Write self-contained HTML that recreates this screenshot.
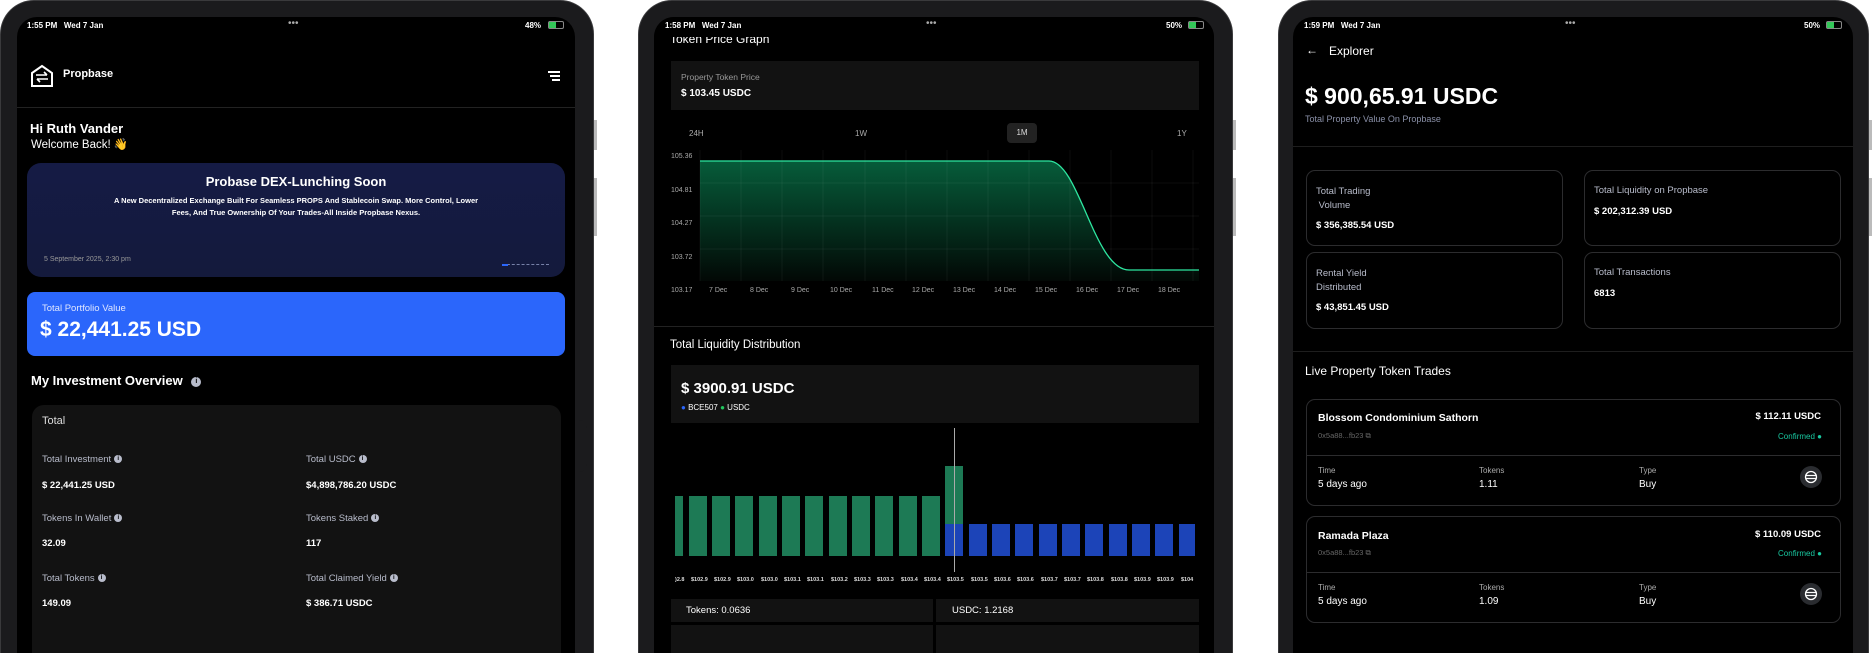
<!DOCTYPE html>
<html><head><meta charset="utf-8"><style>
*{margin:0;padding:0;box-sizing:border-box}
html,body{width:1872px;height:653px;overflow:hidden;background:#fff}
body{font-family:"Liberation Sans",sans-serif;color:#fff}
#w{position:relative;width:1872px;height:653px;overflow:hidden}
.a{position:absolute;white-space:nowrap}
.dev{position:absolute;top:0;height:653px;background:#1b1b1d;border-radius:34px 34px 0 0;border:1px solid #3a3a3c;border-bottom:none}
.scr{position:absolute;top:17px;height:636px;background:#000;border-radius:20px 20px 0 0;overflow:hidden}
.sb{font-size:8px;font-weight:bold;top:21px}
.g{color:#b8bccb}
.b{font-weight:bold}
.card{position:absolute;background:#121212}
.ol{position:absolute;border:1px solid #2c2c2e;border-radius:9px}
.info{display:inline-block;width:8px;height:8px;border-radius:50%;background:#b8bccb;color:#000;font-size:6px;text-align:center;line-height:8px;font-weight:bold;vertical-align:middle;margin-left:3px}
.bar{position:absolute;width:18px}
.pl{position:absolute;font-size:5.5px;color:#ddd;top:577px;font-weight:bold}
</style></head><body><div id="w">

<!-- DEVICE 1 -->
<div class="dev" style="left:0;width:594px"></div>
<div class="a" style="left:594px;top:120px;width:3px;height:30px;background:#bbb"></div>
<div class="a" style="left:594px;top:178px;width:3px;height:58px;background:#bbb"></div>
<div class="a" style="left:575px;top:420px;width:12px;height:52px;background:#1b1b1d;border-radius:0 8px 8px 0"></div>
<div class="scr" style="left:17px;width:558px"></div>
<div class="a sb" style="left:27px">1:55 PM&nbsp;&nbsp;&nbsp;Wed 7 Jan</div>
<div class="a" style="left:288px;top:18px;font-size:10px;color:#aaa">•••</div>
<div class="a sb" style="left:525px">48%</div>
<div class="a" style="left:548px;top:21px;width:16px;height:8px;border:1px solid #888;border-radius:2px"><div style="width:7px;height:6px;background:#34c759"></div></div>
<svg class="a" style="left:30px;top:64px" width="24" height="24" viewBox="0 0 24 24" fill="none" stroke="#fff" stroke-width="2"><path d="M2 9 L12 2 L22 9 V22 H2 Z"/><path d="M6 11 H17 M14 8 L17 11 M18 15 H7 M10 18 L7 15" stroke-width="1.6"/></svg>
<div class="a b" style="left:63px;top:68px;font-size:11px">Propbase</div>
<div class="a" style="left:548px;top:71px;width:12px;height:2px;background:#fff"></div>
<div class="a" style="left:550px;top:75px;width:10px;height:2px;background:#fff"></div>
<div class="a" style="left:552px;top:79px;width:8px;height:2px;background:#fff"></div>
<div class="a" style="left:17px;top:107px;width:558px;height:1px;background:#222"></div>
<div class="a b" style="left:30px;top:121px;font-size:13px">Hi Ruth Vander</div>
<div class="a" style="left:31px;top:137px;font-size:11.5px">Welcome Back! <span style="color:#f5c43c">👋</span></div>
<div class="a" style="left:27px;top:163px;width:538px;height:114px;background:linear-gradient(#151b45,#141a3c);border-radius:14px"></div>
<div class="a b" style="left:27px;width:538px;text-align:center;top:174px;font-size:13px">Probase DEX-Lunching Soon</div>
<div class="a b" style="left:27px;width:538px;text-align:center;top:195px;font-size:7.5px;line-height:11.5px;white-space:normal;padding:0 80px">A New Decentralized Exchange Built For Seamless PROPS And Stablecoin Swap. More Control, Lower Fees, And True Ownership Of Your Trades-All Inside Propbase Nexus.</div>
<div class="a" style="left:44px;top:256px;font-size:7px;color:#999">5 September 2025, 2:30 pm</div>
<div class="a" style="left:502px;top:264px;width:47px;height:1px;border-top:1px dashed #7781a8"></div>
<div class="a" style="left:502px;top:264px;width:6px;height:1.5px;background:#2b66fb"></div>
<div class="a" style="left:27px;top:292px;width:538px;height:64px;background:#2b66fb;border-radius:8px"></div>
<div class="a" style="left:42px;top:303px;font-size:9.5px;color:#dfe6ff">Total Portfolio Value</div>
<div class="a b" style="left:40px;top:318px;font-size:21px">$ 22,441.25 USD</div>
<div class="a b" style="left:31px;top:373px;font-size:13px">My Investment Overview <span class="info" style="width:10px;height:10px;line-height:10px;font-size:7px;margin-left:5px">i</span></div>
<div class="card" style="left:32px;top:405px;width:529px;height:248px;border-radius:12px 12px 0 0"></div>
<div class="a" style="left:42px;top:415px;font-size:11px;color:#ddd">Total</div>
<div class="a g" style="left:42px;top:454px;font-size:9.5px">Total Investment<span class="info">i</span></div>
<div class="a b" style="left:42px;top:480px;font-size:9.5px">$ 22,441.25 USD</div>
<div class="a g" style="left:306px;top:454px;font-size:9.5px">Total USDC<span class="info">i</span></div>
<div class="a b" style="left:306px;top:480px;font-size:9.5px">$4,898,786.20 USDC</div>
<div class="a g" style="left:42px;top:513px;font-size:9.5px">Tokens In Wallet<span class="info">i</span></div>
<div class="a b" style="left:42px;top:538px;font-size:9.5px">32.09</div>
<div class="a g" style="left:306px;top:513px;font-size:9.5px">Tokens Staked<span class="info">i</span></div>
<div class="a b" style="left:306px;top:538px;font-size:9.5px">117</div>
<div class="a g" style="left:42px;top:573px;font-size:9.5px">Total Tokens<span class="info">i</span></div>
<div class="a b" style="left:42px;top:598px;font-size:9.5px">149.09</div>
<div class="a g" style="left:306px;top:573px;font-size:9.5px">Total Claimed Yield<span class="info">i</span></div>
<div class="a b" style="left:306px;top:598px;font-size:9.5px">$ 386.71 USDC</div>

<!-- DEVICE 2 -->
<div class="dev" style="left:638px;width:595px"></div>
<div class="a" style="left:1233px;top:120px;width:3px;height:30px;background:#bbb"></div>
<div class="a" style="left:1233px;top:178px;width:3px;height:58px;background:#bbb"></div>
<div class="a" style="left:1205px;top:422px;width:14px;height:52px;background:#1b1b1d;border-radius:8px"></div>
<div class="scr" style="left:654px;width:560px"></div>
<div class="a" style="left:654px;top:37px;width:560px;height:20px;overflow:hidden"><div class="a" style="left:16px;top:-5px;font-size:12px">Token Price Graph</div></div>
<div class="a" style="left:654px;top:17px;width:560px;height:20px;background:#000;border-radius:20px 20px 0 0"></div>
<div class="a sb" style="left:665px">1:58 PM&nbsp;&nbsp;&nbsp;Wed 7 Jan</div>
<div class="a" style="left:926px;top:18px;font-size:10px;color:#aaa">•••</div>
<div class="a sb" style="left:1166px">50%</div>
<div class="a" style="left:1188px;top:21px;width:16px;height:8px;border:1px solid #888;border-radius:2px"><div style="width:7px;height:6px;background:#34c759"></div></div>
<div class="card" style="left:671px;top:61px;width:528px;height:49px"></div>
<div class="a" style="left:681px;top:72px;font-size:8.5px;color:#999">Property Token Price</div>
<div class="a b" style="left:681px;top:88px;font-size:10px">$ 103.45 USDC</div>
<div class="a" style="left:689px;top:129px;font-size:8px;color:#aaa">24H</div>
<div class="a" style="left:855px;top:129px;font-size:8px;color:#aaa">1W</div>
<div class="a" style="left:1007px;top:123px;width:30px;height:20px;background:#222;border-radius:4px;font-size:8px;text-align:center;line-height:20px;color:#ddd">1M</div>
<div class="a" style="left:1177px;top:129px;font-size:8px;color:#aaa">1Y</div>
<svg class="a" style="left:654px;top:140px" width="560" height="160">
<defs><linearGradient id="gf" x1="0" y1="0" x2="0" y2="1"><stop offset="0" stop-color="#065c3a"/><stop offset="1" stop-color="#020805"/></linearGradient></defs>
<path d="M46 21 H395 C425 21 440 130 475 130 H545 V141 H46 Z" fill="url(#gf)"/>
<g stroke="#ffffff" stroke-opacity="0.05" stroke-width="1">
<path d="M46 10V141M87 10V141M128 10V141M169 10V141M211 10V141M252 10V141M293 10V141M334 10V141M375 10V141M416 10V141M457 10V141M498 10V141M539 10V141"/>
<path d="M46 43H545M46 76H545M46 109H545"/></g>
<path d="M46 21 H395 C425 21 440 130 475 130 H545" fill="none" stroke="#2ee6a0" stroke-width="1.3"/>
<g font-size="7" fill="#aaa" font-family="Liberation Sans">
<text x="17" y="18">105.36</text><text x="17" y="52">104.81</text><text x="17" y="85">104.27</text><text x="17" y="119">103.72</text><text x="17" y="152">103.17</text>
<text x="55" y="152">7 Dec</text><text x="96" y="152">8 Dec</text><text x="137" y="152">9 Dec</text><text x="176" y="152">10 Dec</text><text x="218" y="152">11 Dec</text><text x="258" y="152">12 Dec</text><text x="299" y="152">13 Dec</text><text x="340" y="152">14 Dec</text><text x="381" y="152">15 Dec</text><text x="422" y="152">16 Dec</text><text x="463" y="152">17 Dec</text><text x="504" y="152">18 Dec</text></g>
</svg>
<div class="a" style="left:654px;top:326px;width:560px;height:1px;background:#222"></div>
<div class="a" style="left:670px;top:339px;font-size:11.5px">Total Liquidity Distribution</div>
<div class="card" style="left:671px;top:365px;width:528px;height:58px"></div>
<div class="a b" style="left:681px;top:380px;font-size:15px">$ 3900.91 USDC</div>
<div class="a" style="left:681px;top:403px;font-size:8px"><span style="color:#2b66fb">●</span> BCE507 <span style="color:#22c55e">●</span> USDC</div>
<div class="bar" style="left:675px;top:496px;width:8px;height:60px;background:#1d7a55"></div>
<div class="bar" style="left:689px;top:496px;height:60px;background:#1d7a55"></div>
<div class="bar" style="left:712px;top:496px;height:60px;background:#1d7a55"></div>
<div class="bar" style="left:735px;top:496px;height:60px;background:#1d7a55"></div>
<div class="bar" style="left:759px;top:496px;height:60px;background:#1d7a55"></div>
<div class="bar" style="left:782px;top:496px;height:60px;background:#1d7a55"></div>
<div class="bar" style="left:805px;top:496px;height:60px;background:#1d7a55"></div>
<div class="bar" style="left:829px;top:496px;height:60px;background:#1d7a55"></div>
<div class="bar" style="left:852px;top:496px;height:60px;background:#1d7a55"></div>
<div class="bar" style="left:875px;top:496px;height:60px;background:#1d7a55"></div>
<div class="bar" style="left:899px;top:496px;height:60px;background:#1d7a55"></div>
<div class="bar" style="left:922px;top:496px;height:60px;background:#1d7a55"></div>
<div class="bar" style="left:945px;top:466px;height:58px;background:#1d7a55"></div>
<div class="bar" style="left:945px;top:524px;height:32px;background:#1c44b8"></div>
<div class="bar" style="left:969px;top:524px;height:32px;background:#1c44b8"></div>
<div class="bar" style="left:992px;top:524px;height:32px;background:#1c44b8"></div>
<div class="bar" style="left:1015px;top:524px;height:32px;background:#1c44b8"></div>
<div class="bar" style="left:1039px;top:524px;height:32px;background:#1c44b8"></div>
<div class="bar" style="left:1062px;top:524px;height:32px;background:#1c44b8"></div>
<div class="bar" style="left:1085px;top:524px;height:32px;background:#1c44b8"></div>
<div class="bar" style="left:1109px;top:524px;height:32px;background:#1c44b8"></div>
<div class="bar" style="left:1132px;top:524px;height:32px;background:#1c44b8"></div>
<div class="bar" style="left:1155px;top:524px;height:32px;background:#1c44b8"></div>
<div class="bar" style="left:1179px;top:524px;height:32px;width:16px;background:#1c44b8"></div>
<div class="a" style="left:954px;top:428px;width:1px;height:144px;background:#aaa"></div>
<div class="pl" style="left:675px">)2.8</div><div class="pl" style="left:691px">$102.9</div><div class="pl" style="left:714px">$102.9</div><div class="pl" style="left:737px">$103.0</div><div class="pl" style="left:761px">$103.0</div><div class="pl" style="left:784px">$103.1</div><div class="pl" style="left:807px">$103.1</div><div class="pl" style="left:831px">$103.2</div><div class="pl" style="left:854px">$103.3</div><div class="pl" style="left:877px">$103.3</div><div class="pl" style="left:901px">$103.4</div><div class="pl" style="left:924px">$103.4</div><div class="pl" style="left:947px">$103.5</div><div class="pl" style="left:971px">$103.5</div><div class="pl" style="left:994px">$103.6</div><div class="pl" style="left:1017px">$103.6</div><div class="pl" style="left:1041px">$103.7</div><div class="pl" style="left:1064px">$103.7</div><div class="pl" style="left:1087px">$103.8</div><div class="pl" style="left:1111px">$103.8</div><div class="pl" style="left:1134px">$103.9</div><div class="pl" style="left:1157px">$103.9</div><div class="pl" style="left:1181px">$104</div>
<div class="card" style="left:671px;top:599px;width:262px;height:23px"></div>
<div class="card" style="left:936px;top:599px;width:263px;height:23px"></div>
<div class="a" style="left:686px;top:605px;font-size:9.5px">Tokens: 0.0636</div>
<div class="a" style="left:952px;top:605px;font-size:9.5px">USDC: 1.2168</div>
<div class="card" style="left:671px;top:625px;width:262px;height:28px"></div>
<div class="card" style="left:936px;top:625px;width:263px;height:28px"></div>

<!-- DEVICE 3 -->
<div class="dev" style="left:1278px;width:591px"></div>
<div class="a" style="left:1869px;top:120px;width:3px;height:30px;background:#bbb"></div>
<div class="a" style="left:1869px;top:178px;width:3px;height:58px;background:#bbb"></div>
<div class="scr" style="left:1293px;width:560px"></div>
<div class="a sb" style="left:1304px">1:59 PM&nbsp;&nbsp;&nbsp;Wed 7 Jan</div>
<div class="a" style="left:1565px;top:18px;font-size:10px;color:#aaa">•••</div>
<div class="a sb" style="left:1804px">50%</div>
<div class="a" style="left:1826px;top:21px;width:16px;height:8px;border:1px solid #888;border-radius:2px"><div style="width:7px;height:6px;background:#34c759"></div></div>
<div class="a" style="left:1306px;top:43px;font-size:12px">←</div>
<div class="a" style="left:1329px;top:44px;font-size:12px">Explorer</div>
<div class="a b" style="left:1305px;top:83px;font-size:23px">$ 900,65.91 USDC</div>
<div class="a" style="left:1305px;top:114px;font-size:9px;color:#8a90a8">Total Property Value On Propbase</div>
<div class="a" style="left:1293px;top:146px;width:560px;height:1px;background:#1e1e1e"></div>
<div class="ol" style="left:1306px;top:170px;width:257px;height:76px"></div>
<div class="ol" style="left:1584px;top:170px;width:257px;height:76px"></div>
<div class="ol" style="left:1306px;top:252px;width:257px;height:77px"></div>
<div class="ol" style="left:1584px;top:252px;width:257px;height:77px"></div>
<div class="a g" style="left:1316px;top:185px;font-size:9.5px;line-height:14px">Total Trading<br>&nbsp;Volume</div>
<div class="a b" style="left:1316px;top:220px;font-size:9.5px">$ 356,385.54 USD</div>
<div class="a g" style="left:1594px;top:185px;font-size:9.5px">Total Liquidity on Propbase</div>
<div class="a b" style="left:1594px;top:206px;font-size:9.5px">$ 202,312.39 USD</div>
<div class="a g" style="left:1316px;top:267px;font-size:9.5px;line-height:14px">Rental Yield<br>Distributed</div>
<div class="a b" style="left:1316px;top:302px;font-size:9.5px">$ 43,851.45 USD</div>
<div class="a g" style="left:1594px;top:267px;font-size:9.5px">Total Transactions</div>
<div class="a b" style="left:1594px;top:288px;font-size:9.5px">6813</div>
<div class="a" style="left:1293px;top:351px;width:560px;height:1px;background:#1e1e1e"></div>
<div class="a" style="left:1305px;top:364px;font-size:12px">Live Property Token Trades</div>

<div class="ol" style="left:1306px;top:399px;width:535px;height:107px"></div>
<div class="a" style="left:1306px;top:455px;width:535px;height:1px;background:#2c2c2e"></div>
<div class="a b" style="left:1318px;top:412px;font-size:10.5px">Blossom Condominium Sathorn</div>
<div class="a" style="left:1318px;top:431px;font-size:7.5px;color:#666">0x5a88...fb23 ⧉</div>
<div class="a b" style="left:1700px;width:121px;text-align:right;top:411px;font-size:9.5px">$ 112.11 USDC</div>
<div class="a" style="left:1700px;width:122px;text-align:right;top:432px;font-size:8px;color:#19c8a0">Confirmed ●</div>
<div class="a" style="left:1318px;top:466px;font-size:8px;color:#aaa">Time</div>
<div class="a" style="left:1318px;top:479px;font-size:10px">5 days ago</div>
<div class="a" style="left:1479px;top:466px;font-size:8px;color:#aaa">Tokens</div>
<div class="a" style="left:1479px;top:479px;font-size:10px">1.11</div>
<div class="a" style="left:1639px;top:466px;font-size:8px;color:#aaa">Type</div>
<div class="a" style="left:1639px;top:479px;font-size:10px">Buy</div>
<div class="a" style="left:1800px;top:466px;width:22px;height:22px;border-radius:50%;background:#2a2c30"></div>
<svg class="a" style="left:1804px;top:470px" width="14" height="14"><circle cx="7" cy="7" r="5.5" fill="none" stroke="#fff" stroke-width="1.3"/><path d="M2 5.5H12M2 8.5H12" stroke="#fff" stroke-width="1.3"/></svg>

<div class="ol" style="left:1306px;top:516px;width:535px;height:107px"></div>
<div class="a" style="left:1306px;top:572px;width:535px;height:1px;background:#2c2c2e"></div>
<div class="a b" style="left:1318px;top:530px;font-size:10.5px">Ramada Plaza</div>
<div class="a" style="left:1318px;top:548px;font-size:7.5px;color:#666">0x5a88...fb23 ⧉</div>
<div class="a b" style="left:1700px;width:121px;text-align:right;top:529px;font-size:9.5px">$ 110.09 USDC</div>
<div class="a" style="left:1700px;width:122px;text-align:right;top:549px;font-size:8px;color:#19c8a0">Confirmed ●</div>
<div class="a" style="left:1318px;top:583px;font-size:8px;color:#aaa">Time</div>
<div class="a" style="left:1318px;top:596px;font-size:10px">5 days ago</div>
<div class="a" style="left:1479px;top:583px;font-size:8px;color:#aaa">Tokens</div>
<div class="a" style="left:1479px;top:596px;font-size:10px">1.09</div>
<div class="a" style="left:1639px;top:583px;font-size:8px;color:#aaa">Type</div>
<div class="a" style="left:1639px;top:596px;font-size:10px">Buy</div>
<div class="a" style="left:1800px;top:583px;width:22px;height:22px;border-radius:50%;background:#2a2c30"></div>
<svg class="a" style="left:1804px;top:587px" width="14" height="14"><circle cx="7" cy="7" r="5.5" fill="none" stroke="#fff" stroke-width="1.3"/><path d="M2 5.5H12M2 8.5H12" stroke="#fff" stroke-width="1.3"/></svg>
</div></body></html>
